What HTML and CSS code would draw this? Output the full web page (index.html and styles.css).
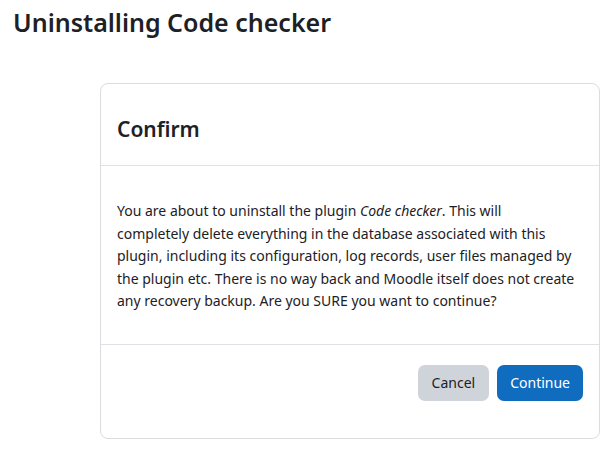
FILE: index.html
```html
<!DOCTYPE html>
<html>
<head>
<meta charset="utf-8">
<link rel="stylesheet" href="styles.css">
</head>
<body>
<h2 class="page-title">Uninstalling Code checker</h2>
<div class="card">
  <div class="card-header"><h4 class="card-title">Confirm</h4></div>
  <div class="card-body">
    <p>You are about to uninstall the plugin <em>Code checker</em>. This will<br>completely delete everything in the database associated with this<br>plugin, including its configuration, log records, user files managed by<br>the plugin etc. There is no way back and Moodle itself does not create<br>any recovery backup. Are you SURE you want to continue?</p>
  </div>
  <div class="card-footer">
    <button class="btn btn-secondary">Cancel</button>
    <button class="btn btn-primary">Continue</button>
  </div>
</div>
</body>
</html>
```
FILE: styles.css
```css
html, body { margin: 0; padding: 0; background: #fff; }
body {
  font-family: "Noto Sans", "Open Sans", sans-serif;
  font-size: 14px;
  line-height: 22.5px;
  color: #1d2125;
}
.page-title {
  margin: 0;
  padding: 6px 0 0 13px;
  font-size: 25px;
  font-weight: 600;
  line-height: 32px;
}
.card {
  margin: 45px 0 0 100px;
  width: 498px;
  border: 1px solid #dadce0;
  border-radius: 8px;
}
.card-header {
  height: 82px;
  padding: 0 16px;
  display: flex;
  align-items: center;
  border-bottom: 1px solid #dee2e6;
  box-sizing: border-box;
}
.card-title {
  margin: 9px 0 0;
  font-size: 21px;
  font-weight: 600;
}
.card-body {
  padding: 34px 10px 31px 16px;
  border-bottom: 1px solid #dee2e6;
}
.card-body p { margin: 0; white-space: nowrap; }
.card-footer {
  display: flex;
  justify-content: flex-end;
  gap: 8px;
  padding: 20px 16px 37px;
}
.btn {
  font-family: inherit;
  font-size: 14px;
  height: 36px;
  padding: 0 14px;
  border: none;
  border-radius: 7px;
}
.btn-secondary { background: #ced4da; color: #1d2125; }
.btn-primary { background: #0f6cbf; color: #fff; padding: 0 13px; }
```
